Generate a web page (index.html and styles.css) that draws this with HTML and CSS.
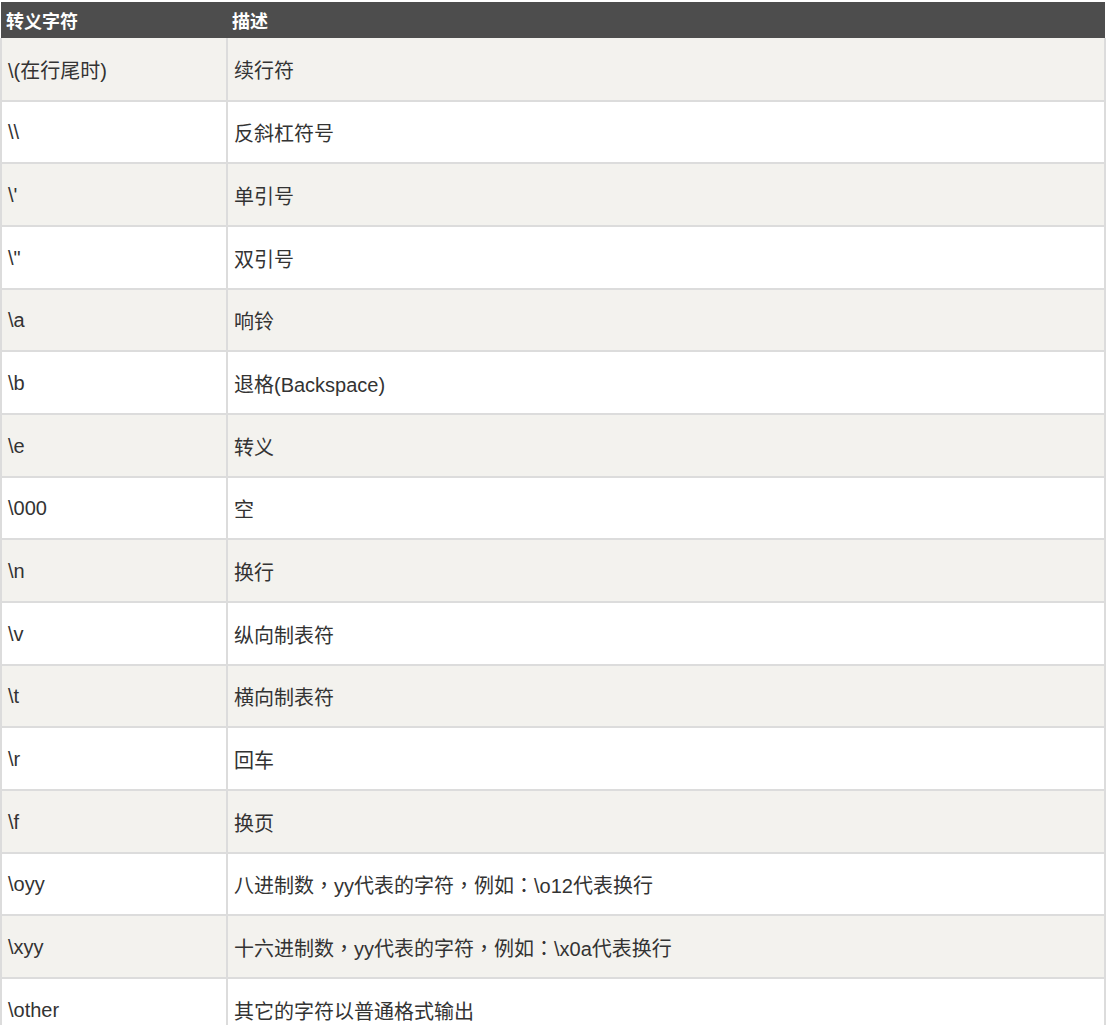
FILE: index.html
```html
<!DOCTYPE html>
<html lang="zh">
<head>
<meta charset="utf-8">
<link rel="stylesheet" href="styles.css">
</head>
<body>
<table class="esc">
  <thead>
    <tr><th class="c1">转义字符</th><th>描述</th></tr>
  </thead>
  <tbody>
    <tr><td class="c1">\(在行尾时)</td><td>续行符</td></tr>
    <tr><td class="c1">\\</td><td>反斜杠符号</td></tr>
    <tr><td class="c1">\'</td><td>单引号</td></tr>
    <tr><td class="c1">\"</td><td>双引号</td></tr>
    <tr><td class="c1">\a</td><td>响铃</td></tr>
    <tr><td class="c1">\b</td><td>退格(Backspace)</td></tr>
    <tr><td class="c1">\e</td><td>转义</td></tr>
    <tr><td class="c1">\000</td><td>空</td></tr>
    <tr><td class="c1">\n</td><td>换行</td></tr>
    <tr><td class="c1">\v</td><td>纵向制表符</td></tr>
    <tr><td class="c1">\t</td><td>横向制表符</td></tr>
    <tr><td class="c1">\r</td><td>回车</td></tr>
    <tr><td class="c1">\f</td><td>换页</td></tr>
    <tr><td class="c1">\oyy</td><td>八进制数<span class="punct" lang="zh-Hant">，</span>yy代表的字符<span class="punct" lang="zh-Hant">，</span>例如<span class="punct" lang="zh-Hant">：</span>\o12代表换行</td></tr>
    <tr><td class="c1">\xyy</td><td>十六进制数<span class="punct" lang="zh-Hant">，</span>yy代表的字符<span class="punct" lang="zh-Hant">，</span>例如<span class="punct" lang="zh-Hant">：</span>\x0a代表换行</td></tr>
    <tr><td class="c1">\other</td><td>其它的字符以普通格式输出</td></tr>
  </tbody>
</table>
</body>
</html>
```

FILE: styles.css
```css
html, body {
  margin: 0;
  padding: 0;
  background: #ffffff;
}
body {
  font-family: "Liberation Sans", Arial, "Noto Sans CJK SC", sans-serif;
  color: #333333;
  overflow: hidden;
}
.esc {
  border-collapse: collapse;
  width: 1106px;
  margin-top: 2px;
  table-layout: fixed;
  font-size: 20px;
}
.esc .c1 {
  width: 226px;
}
.esc th {
  background: #4d4d4d;
  color: #ffffff;
  font-weight: bold;
  font-size: 18px;
  text-align: left;
  height: 36px;
  padding: 0 5px;
  border: 0;
  box-sizing: border-box;
}
.esc td {
  height: 62.67px;
  box-sizing: border-box;
  padding: 2px 6px 0;
  border: 2px solid #dcdcdc;
  border-top: 0;
  vertical-align: middle;
}
.esc tbody tr:nth-child(odd) td {
  background: #f3f2ee;
}
.esc tbody tr:nth-child(even) td {
  background: #ffffff;
}
.punct {
  font-family: "Noto Sans CJK TC", "Noto Sans CJK SC", sans-serif;
}
```
